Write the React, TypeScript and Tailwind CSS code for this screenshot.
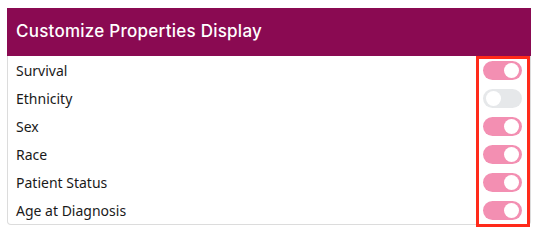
import React from "react";

const rows: { label: string; on: boolean }[] = [
  { label: "Survival", on: true },
  { label: "Ethnicity", on: false },
  { label: "Sex", on: true },
  { label: "Race", on: true },
  { label: "Patient Status", on: true },
  { label: "Age at Diagnosis", on: true },
];

function Toggle({ on }: { on: boolean }) {
  return (
    <div
      className={
        on
          ? "flex h-[19px] w-[39px] items-center justify-end rounded-full bg-[#f38fb2] px-[3px]"
          : "flex h-[19px] w-[39px] items-center justify-start rounded-full bg-[#e6e8ea] px-[3px]"
      }
    >
      <div className="h-[15px] w-[15px] rounded-full bg-white" />
    </div>
  );
}

export default function App() {
  return (
    <div className="h-[236px] w-[540px] bg-white pl-[7px] pt-[8px]">
      <div className="relative w-[524px]">
        <div className="flex h-[48px] items-center bg-[#8a0a52] pl-[9px] font-['Inter',sans-serif] text-[17px] font-medium tracking-[0.25px] text-white">
          Customize Properties Display
        </div>
        <div className="rounded-b-[4px] border border-t-0 border-[#dcdcdc] font-['Noto_Sans',sans-serif] text-[14px] text-[#1a1a1a]">
          {rows.map((r) => (
            <div key={r.label} className="flex h-[28px] items-center justify-between pl-[8px] pr-[8px]">
              <span>{r.label}</span>
              <Toggle on={r.on} />
            </div>
          ))}
        </div>
        <div className="absolute left-[469px] top-[48px] h-[171px] w-[54px] border-[3px] border-[#ff2a1a]" />
      </div>
    </div>
  );
}
